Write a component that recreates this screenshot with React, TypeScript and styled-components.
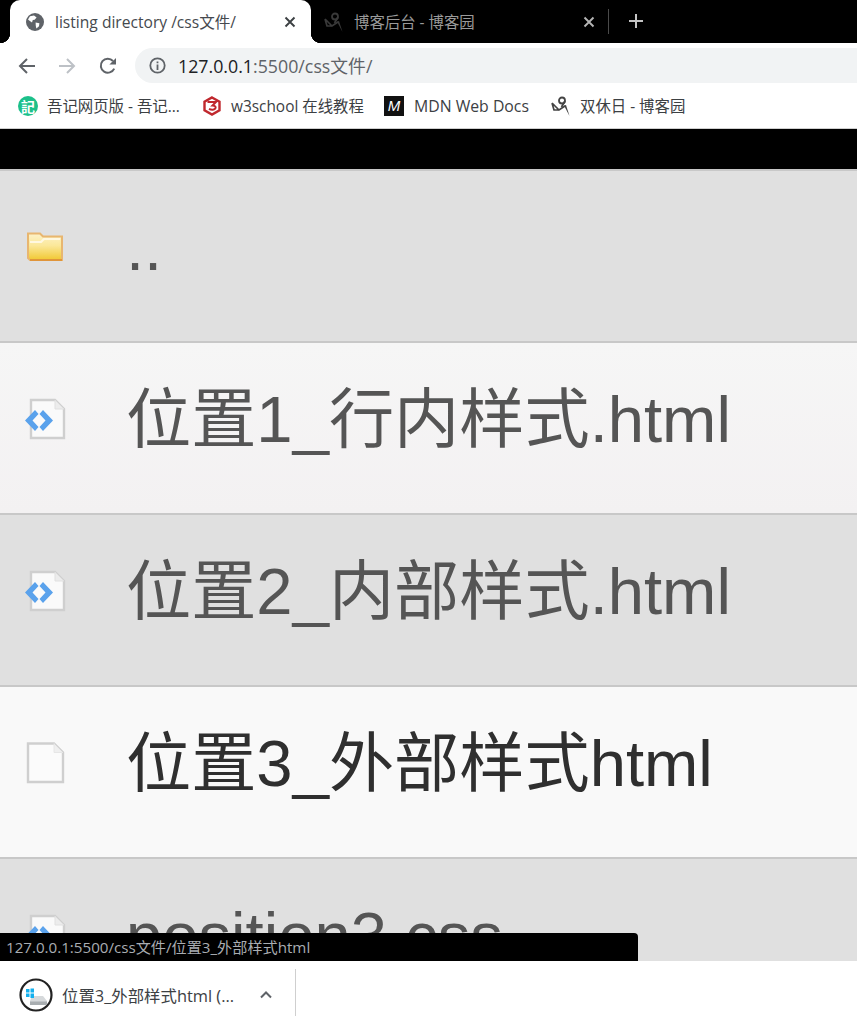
import React from "react";
import styled, { createGlobalStyle } from "styled-components";

const Global = createGlobalStyle`
  html, body { margin: 0; padding: 0; height: 100%; background: #fff; }
  #root { height: 100%; }
  * { box-sizing: border-box; }
`;

const UI = `"Open Sans", "Noto Sans CJK SC", sans-serif`;

const Shell = styled.div`
  width: 857px; height: 1016px; display: flex; flex-direction: column; overflow: hidden;
  font-family: ${UI}; position: relative;
`;
const TabStrip = styled.div`
  height: 43px; flex: none; background: #000; display: flex; align-items: flex-start; padding-left: 10px;
`;
const ActiveTab = styled.div`
  position: relative; width: 301px; height: 43px; margin-top: 0; background: #fff;
  border-radius: 10px 10px 0 0; display: flex; align-items: center; padding: 0 15px 0 16px;
  &::before, &::after { content: ""; position: absolute; bottom: 0; width: 10px; height: 10px; background: #fff; }
  &::before { left: -10px; -webkit-mask: radial-gradient(circle at 0 0, transparent 10px, #000 10.5px); mask: radial-gradient(circle at 0 0, transparent 10px, #000 10.5px); }
  &::after { right: -10px; -webkit-mask: radial-gradient(circle at 100% 0, transparent 10px, #000 10.5px); mask: radial-gradient(circle at 100% 0, transparent 10px, #000 10.5px); }
`;
const TabTitle = styled.span<{ $dim?: boolean }>`
  flex: 1; font-size: 15.6px; white-space: nowrap; margin-left: 11px;
  color: ${p => (p.$dim ? "#9a9a9a" : "#45494e")};
`;
const InactiveTab = styled.div`
  width: 297px; height: 43px; display: flex; align-items: center; padding: 0 13px 0 13px;
  & > span { margin-left: 10px; font-size: 15.4px; }
`;
const TabDivider = styled.div`
  width: 1px; height: 25px; background: #4a4a4a; margin-top: 9px;
`;
const NewTab = styled.div`
  width: 54px; height: 43px; display: flex; align-items: center; justify-content: center; padding-bottom: 2px;
`;
const Toolbar = styled.div`
  height: 41px; flex: none; background: #fff; display: flex; align-items: flex-start; padding: 5px 0 0 17px;
`;
const NavGroup = styled.div`
  display: flex; gap: 20px; align-items: center; height: 35px; width: 118px; flex: none;
  & > svg:last-child { margin-left: 1px; }
`;
const Omnibox = styled.div`
  flex: 1; height: 35px; background: #f1f3f4; border-radius: 17.5px 0 0 17.5px; display: flex; align-items: center; padding-left: 14px;
`;
const Url = styled.span`
  font-size: 17.8px; margin-left: 12px; margin-top: -2px; color: #202124; white-space: nowrap;
  & > em { font-style: normal; color: #5f6368; }
`;
const BookmarkBar = styled.div`
  height: 45px; flex: none; background: #fff; border-bottom: 1px solid #cfcfcf; display: flex; align-items: center; padding: 0 0 1px 18px;
`;
const Bookmark = styled.div<{ $w: number; $size?: number }>`
  width: ${p => p.$w}px; flex: none; display: flex; align-items: center; gap: 9px;
  font-size: ${p => p.$size ?? 15.4}px; color: #3c4043; white-space: nowrap;
`;
const Green = styled.span`
  width: 20px; height: 20px; border-radius: 50%; background: #1cc08a; color: #fff; font-size: 14px; font-weight: 700; line-height: 20px; text-align: center; flex: none;
  font-family: "Noto Sans CJK SC", sans-serif;
`;
const Mdn = styled.span`
  width: 20px; height: 20px; background: #111; color: #fff; font: italic 400 15px/20px "Liberation Sans", sans-serif; text-align: center; flex: none; margin-right: 1px;
`;
const Page = styled.div`
  flex: 1; min-height: 0; background: #000; padding-top: 40px; overflow: hidden;
  font-family: "Liberation Sans", "Noto Sans CJK SC", sans-serif;
`;
const Row = styled.div<{ $bg: string; $fg: string }>`
  height: 172px; flex: none; background: ${p => p.$bg}; color: ${p => p.$fg};
  border-top: 2px solid #c8c8c8; display: flex; align-items: center; padding-left: 24px;
`;
const IconCell = styled.div`
  width: 102px; flex: none; height: 44px; margin-bottom: 18px; display: flex; align-items: center;
  & > svg { filter: blur(0.5px); }
`;
const Name = styled.span`
  font-size: 65.2px; line-height: 80px; white-space: nowrap; margin-top: -16px;
`;
const Status = styled.div`
  position: absolute; left: 0; bottom: 55px; width: 638px; height: 28px; background: #000; border-radius: 0 4px 0 0;
  color: #a9adb2; font-size: 15.15px; line-height: 28px; padding-left: 6px; white-space: nowrap;
`;
const DownloadBar = styled.div`
  height: 55px; flex: none; background: #fff; display: flex; align-items: center; padding-left: 19px;
`;
const DownloadItem = styled.div`
  width: 277px; height: 47px; margin-top: 8px; border-right: 1px solid #cfcfcf; display: flex; align-items: center; padding-top: 4px;
`;
const DiskRing = styled.div`
  width: 34px; height: 34px; flex: none;
`;
const DownloadName = styled.span`
  font-size: 16.4px; color: #3c4043; margin-left: 9px; width: 197px; white-space: nowrap;
`;

const Globe = () => (
  <svg width="18" height="18" viewBox="0 0 18 18" style={{ flex: "none" }}>
    <circle cx="9" cy="9" r="9" fill="#5f6368" />
    <path d="M4 3.2 8 2.6 10.6 4.4 8.6 6.8 6.8 7 6 9.4 3.2 7.6 2 6.4ZM9.6 9.4 13.4 10.2 13 13.2 10.4 15.6 9.8 13Z" fill="#fff" />
  </svg>
);
const Close = ({ c }: { c: string }) => (
  <svg width="12" height="12" viewBox="0 0 12 12" style={{ flex: "none" }}>
    <path d="M1.5 1.5 10.5 10.5M10.5 1.5 1.5 10.5" stroke={c} strokeWidth="1.9" />
  </svg>
);
const Cnblogs = ({ c }: { c: string }) => (
  <svg width="20" height="20" viewBox="0 0 20 20" style={{ flex: "none" }}>
    <path d="M1 7 L8 14 L14 10 M1 7 L3 14 L8 14" fill="none" stroke={c} strokeWidth="1.7" />
    <circle cx="11" cy="4.5" r="3" fill="none" stroke={c} strokeWidth="1.8" />
    <path d="M14 5 L10.5 11" fill="none" stroke={c} strokeWidth="1.8" />
    <path d="M13 9.5 L15 9 L18.5 20 Z" fill={c} />
  </svg>
);
const Arrow = ({ c, flip }: { c: string; flip?: boolean }) => (
  <svg width="20" height="20" viewBox="0 0 20 20" style={{ flex: "none", transform: flip ? "scaleX(-1)" : undefined }}>
    <path d="M18 10H3.5M10 3 3 10l7 7" fill="none" stroke={c} strokeWidth="2" />
  </svg>
);
const Reload = () => (
  <svg width="20" height="20" viewBox="0 0 20 20" style={{ flex: "none" }}>
    <path d="M16.2 12.6A7 7 0 1 1 15 5" fill="none" stroke="#5f6368" strokeWidth="2" />
    <path d="M18 2v6.6h-6.6z" fill="#5f6368" />
  </svg>
);
const Info = () => (
  <svg width="17" height="17" viewBox="0 0 17 17" style={{ flex: "none" }}>
    <circle cx="8.5" cy="8.5" r="7.2" fill="none" stroke="#5f6368" strokeWidth="1.8" />
    <path d="M7.6 7.5h1.8V13H7.6zM7.6 4.4h1.8v1.8H7.6z" fill="#5f6368" />
  </svg>
);
const W3 = () => (
  <svg width="20" height="20" viewBox="0 0 20 20" style={{ flex: "none" }}>
    <path d="M10 1.5 17.5 5.7V14.3L10 18.5 2.5 14.3V5.7Z" fill="none" stroke="#c0282e" strokeWidth="2.4" />
    <path d="M5.5 6h8.5L10.5 9.6c2.6 0 3.6 1.2 3 2.6-.7 1.7-4 2-6.5.6" fill="none" stroke="#c0282e" strokeWidth="2" />
  </svg>
);
const Folder = () => (
  <svg width="40" height="30" viewBox="0 0 40 30" style={{ flex: "none" }}>
    <defs>
      <linearGradient id="fo" x1="0" y1="0" x2="0" y2="1">
        <stop offset="0" stopColor="#fdf2c9" />
        <stop offset="0.45" stopColor="#fbe89a" />
        <stop offset="1" stopColor="#f1c832" />
      </linearGradient>
    </defs>
    <path d="M4 1.5h12l3 3h19V28H6L4 26Z" fill="url(#fo)" stroke="#e8b670" strokeWidth="2" />
    <path d="M6 10h11l3-3h16" fill="none" stroke="#fff8e0" strokeWidth="2.2" />
    <path d="M6 28h32" stroke="#e0953a" strokeWidth="2" />
  </svg>
);
const HtmlFile = () => (
  <svg width="42" height="44" viewBox="0 0 42 44" style={{ flex: "none" }}>
    <path d="M7 3h24l9 9v29H7Z" fill="#fafafa" stroke="#cfcfcf" strokeWidth="2.4" />
    <path d="M31 3v9h9" fill="#ececec" stroke="#e0e0e0" strokeWidth="1" />
    <path d="M11 13 1 23.5 11 34l3.5-4L8.5 23.5 14.5 17ZM19 13l-3.5 4 6 6.5-6 6.5 3.5 4 10-10.5Z" fill="#5aa2ec" />
  </svg>
);
const BlankFile = () => (
  <svg width="42" height="44" viewBox="0 0 42 44" style={{ flex: "none" }}>
    <path d="M4 2.5h26l9 9V41H4Z" fill="#fbfbfb" stroke="#cfcfcf" strokeWidth="2.4" />
    <path d="M30 2.5v9h9" fill="#efefef" stroke="#e6e6e6" strokeWidth="1" />
  </svg>
);
const Disk = () => (
  <DiskRing>
    <svg width="34" height="34" viewBox="0 0 34 34">
      <circle cx="17" cy="17" r="15.5" fill="#fff" stroke="#222" strokeWidth="2.2" />
      <path d="M13 18h11l4 5v4H11v-4Z" fill="#d6d9db" />
      <path d="M11 23.5h17V27H11Z" fill="#a8adb0" />
      <path d="M7 11h3.5v3.5H7zM11.5 10.5H15v4h-3.5zM7 15.5h3.5V19H7zM11.5 15.5H15V20h-3.5z" fill="#14b0ee" />
    </svg>
  </DiskRing>
);

const rows = [
  { id: "up", bg: "#e0e0e0", fg: "#555", name: "..", icon: <Folder /> },
  { id: "a", bg: "linear-gradient(#f6f6f6, #f3f1f2)", fg: "#555", name: "位置1_行内样式.html", icon: <HtmlFile /> },
  { id: "b", bg: "#e0e0e0", fg: "#555", name: "位置2_内部样式.html", icon: <HtmlFile /> },
  { id: "c", bg: "#f9f9f9", fg: "#2f2f2f", name: "位置3_外部样式html", icon: <BlankFile /> },
  { id: "d", bg: "#e0e0e0", fg: "#555", name: "position3.css", icon: <HtmlFile /> },
];

export default function App() {
  return (
    <Shell>
      <Global />
      <TabStrip>
        <ActiveTab>
          <Globe />
          <TabTitle>listing directory /css文件/</TabTitle>
          <Close c="#3c4043" />
        </ActiveTab>
        <InactiveTab>
          <Cnblogs c="#3a3a3a" />
          <TabTitle $dim>博客后台 - 博客园</TabTitle>
          <Close c="#b5b5b5" />
        </InactiveTab>
        <TabDivider />
        <NewTab>
          <svg width="16" height="16" viewBox="0 0 16 16">
            <path d="M8 1v14M1 8h14" stroke="#c4c4c4" strokeWidth="2" />
          </svg>
        </NewTab>
      </TabStrip>
      <Toolbar>
        <NavGroup>
          <Arrow c="#5f6368" />
          <Arrow c="#bdc1c6" flip />
          <Reload />
        </NavGroup>
        <Omnibox>
          <Info />
          <Url>127.0.0.1<em>:5500/css文件/</em></Url>
        </Omnibox>
      </Toolbar>
      <BookmarkBar>
        <Bookmark $w={184}><Green>記</Green>吾记网页版 - 吾记...</Bookmark>
        <Bookmark $w={182}><W3 />w3school 在线教程</Bookmark>
        <Bookmark $w={167} $size={15.8}><Mdn>M</Mdn>MDN Web Docs</Bookmark>
        <Bookmark $w={150}><Cnblogs c="#444" />双休日 - 博客园</Bookmark>
      </BookmarkBar>
      <Page>
        {rows.map(r => (
          <Row key={r.id} $bg={r.bg} $fg={r.fg}>
            <IconCell>{r.icon}</IconCell>
            <Name>{r.name}</Name>
          </Row>
        ))}
      </Page>
      <Status>127.0.0.1:5500/css文件/位置3_外部样式html</Status>
      <DownloadBar>
        <DownloadItem>
          <Disk />
          <DownloadName>位置3_外部样式html (...</DownloadName>
          <svg width="14" height="9" viewBox="0 0 14 9">
            <path d="M2 7.5 7 2.5l5 5" fill="none" stroke="#5f6368" strokeWidth="2" />
          </svg>
        </DownloadItem>
      </DownloadBar>
    </Shell>
  );
}
